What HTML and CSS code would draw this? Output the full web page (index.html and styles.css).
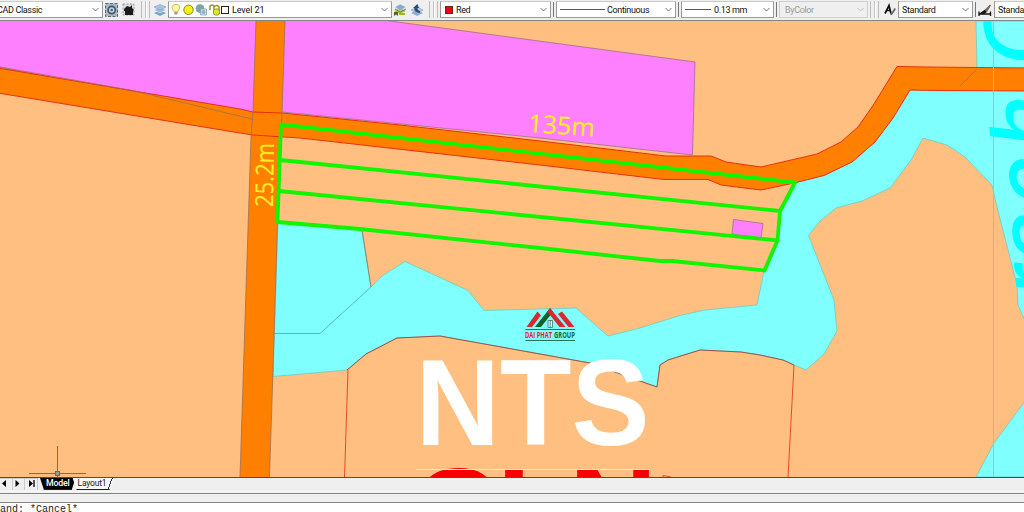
FILE: index.html
```html
<!DOCTYPE html>
<html lang="en">
<head>
<meta charset="utf-8">
<title>Drawing</title>
<link rel="stylesheet" href="styles.css">
</head>
<body>
<div class="app">
  <header class="toolbar">
    <div class="combo workspace"><span class="label">CAD Classic</span><svg class="arrow" viewBox="0 0 7 5"><path d="M.5 1 3.500 4 6.500 1"/></svg></div>
    <svg class="icon" viewBox="0 0 14 14"><rect x=".5" y=".5" width="12" height="13" fill="#a9b8c4" stroke="#58697a" stroke-dasharray="3 1.500"/><circle cx="6.700" cy="7" r="3.600" fill="#cad5dd" stroke="#43576a" stroke-width="1.700"/><circle cx="6.700" cy="7" r="1.300" fill="#567"/></svg>
    <svg class="icon gap-sm" viewBox="0 0 14 14"><rect x="1" y="1" width="11" height="11" fill="#ddd" stroke="#999" stroke-dasharray="2 1.500"/><path d="M2 6 5 3 8 4 10 2v3l2 2-1 1v4H3V8H2z" fill="#191b1d"/></svg>
    <i class="grip"></i>
    <svg class="icon" viewBox="0 0 14 14"><path d="M1 10 7 7.500l6 2.500-6 3z" fill="#7da0c6"/><path d="M1 7 7 4.500 13 7l-6 3z" fill="#a0bdd9" stroke="#e8f0f7" stroke-width=".5"/><path d="M1 4 7 1.500 13 4 7 7z" fill="#a9c5df" stroke="#6f91b4" stroke-width=".5"/></svg>
    <div class="combo layer">
      <svg class="layer-icons" viewBox="0 0 62 14">
        <path d="M5.500 9C3.500 7 3 5.800 3.100 4.200 3.300 2.500 4.700 1.500 7 1.500s3.600 1 3.700 2.700C10.800 5.800 10 7 8.500 9z" fill="#fff79b" stroke="#b8a64e" stroke-width=".8"/><path d="M5.500 9h3v2.500h-3z" fill="#a5997a"/>
        <circle cx="19.500" cy="6.800" r="4.700" fill="#f5f118" stroke="#85852f"/>
        <circle cx="31" cy="5.500" r="4" fill="#7aa6a4" stroke="#8ca9b4"/><path d="M31.500 6h6v6h-6z" fill="#d5e2ed" stroke="#809eb6" stroke-width=".8"/><circle cx="34.500" cy="9" r="2" fill="#91b2cd"/>
        <path d="M41 7V3q2-2 4 0v5M45 4q3-3 5 0v3" fill="none" stroke="#999719" stroke-width="1.500"/><rect x="44.500" y="6" width="6" height="6" rx="2" fill="#dce735" stroke="#999719"/>
        <rect x="52.500" y="3.500" width="7" height="7" fill="#fff" stroke="#222"/>
      </svg><span class="label">Level 21</span><svg class="arrow" viewBox="0 0 7 5"><path d="M.5 1 3.500 4 6.500 1"/></svg></div>
    <svg class="icon pull" viewBox="0 0 14 14"><path d="M1 8 7 5l6 3-6 3z" fill="#c1c52c"/><path d="M2 4 7 1l6 3-6 4z" fill="#8eabc5" stroke="#e8f0f7" stroke-width=".5"/><path d="M2 6 7 9l6-3" fill="none" stroke="#55749a"/><path d="M1 9v4l2-1.500L5 13V9z" fill="#53632e"/><path d="M6 11h6" stroke="#a5b426" stroke-width="2"/></svg>
    <svg class="icon gap-sm" viewBox="0 0 14 14"><path d="M1 10 7 7l6 3-6 3z" fill="#92afd0"/><path d="M1 7 7 4l6 3-6 3z" fill="#bacfe3" stroke="#6d8dae" stroke-width=".5"/><path d="M10 10Q3 9 4.500 5L3 5 7.500 1 9 5H7.500Q7 7 10 8z" fill="#284d7f"/></svg>
    <i class="grip layer-grip"></i>
    <div class="combo color"><i class="swatch"></i><span class="label">Red</span><svg class="arrow" viewBox="0 0 7 5"><path d="M.5 1 3.500 4 6.500 1"/></svg></div>
    <i class="bar"></i>
    <div class="combo linetype"><i class="sample"></i><span class="label">Continuous</span><svg class="arrow" viewBox="0 0 7 5"><path d="M.5 1 3.500 4 6.500 1"/></svg></div>
    <i class="bar"></i>
    <div class="combo weight"><i class="sample"></i><span class="label">0.13 mm</span><svg class="arrow" viewBox="0 0 7 5"><path d="M.5 1 3.500 4 6.500 1"/></svg></div>
    <i class="bar"></i>
    <div class="combo plot disabled"><span class="label">ByColor</span><svg class="arrow" viewBox="0 0 7 5"><path d="M.5 1 3.500 4 6.500 1"/></svg></div>
    <i class="grip plot-grip"></i>
    <svg class="icon text-icon" viewBox="0 0 14 14"><path d="M2 10.500 6 2.500l2 8M4 7.500h4" fill="none" stroke="#111" stroke-width="1.700"/><path d="m7 12 4.500-7 1.500 1-4 6z" fill="#72665d"/></svg>
    <div class="combo text-style"><span class="label">Standard</span><svg class="arrow" viewBox="0 0 7 5"><path d="M.5 1 3.500 4 6.500 1"/></svg></div>
    <i class="bar"></i>
    <svg class="icon" viewBox="0 0 14 14"><path d="M1 8.500v4.500M12.500 8.500v4.500M1 11h12" stroke="#111" stroke-width="1.300"/><path d="m2 10 5-3.500 2 2.500-3 2H1z" fill="#151515"/><path d="m7 6.500 5-5 1 1-4 6.500z" fill="#786a5f"/></svg>
    <div class="combo dim-style"><span class="label">Standard</span></div>
  </header>

  <main class="drawing">
    <svg class="map" viewBox="0 21 1024 456">
      <rect class="land" y="21" width="1024" height="456"/>
      <!-- water -->
      <g class="water">
        <path d="M278 222 362 230 371 287 382 276 405 261.500 468 290.500 484 310.500 576 308 608 336 640 328 680 315.500 705 310 757 305 764 271 777 240 780 211 795 183 824 175 852 162 875 142 893 118 910 90H1026V323L1018 305 1017 285 996 203 992 185 965 157 947 145 923 138 911 160 890 188 862 201 836 208 820 221 808.500 235.500 834 300 837 331 824 354 806 370 794 365 783 360 760 355 741 352 700 350 668 360 660 365 657 387 640 381 590 363 540 354 440 336 397 338 366 354 347 370 273 376.500Z"/>
        <path d="M976 21 977 68H1030V21Z"/>
        <path d="M1026 400 994 443 976 477H1026Z"/>
        <path class="bank" d="M273 333.500H320L371 287"/>
      </g>
      <path class="boundary" d="M794 365 783 360 760 355 741 352 700 350 668 360 660 365 657 387 640 381 590 363 540 354 440 336 397 338 366 354 347 370"/>
      <path class="redline" d="M348 370 344.500 477M794 365 788 477"/>
      <path class="greyline" d="M362 230 371 287"/>
      <!-- buildings -->
      <path class="building" d="M-2 19H378L390 21 695 62 692.500 155 540 138 282 112 253 118-2 67Z"/>
      <path class="building" d="M733.500 219.500 763 223.500 761 238 732 234Z"/>
      <!-- roads -->
      <path class="road" d="M256 21 253 112 251 137 246 290 240 477H269.500L273 370 277.500 222 282 113 285 21Z"/>
      <path class="road" d="M-2 68 240 109 253 112 282 113 400 125 540 141 666 156H711L726 162 761 167 817 154 841 142 858 127 874 104 897 66.500 925 67 1026 68V91L937 90.500 910 90 893 118 875 142 852 162 824 175.500 794 183 761 190 721 185 708 179.500H664L540 165 300 138 253 135 240 133-2 93Z"/>
      <path class="road-edge" d="M-2 68 240 109 253 112 282 113 400 125 540 141 666 156H711L726 162 761 167 817 154 841 142 858 127 874 104 897 66.500 925 67 1026 68M1026 91 937 90.500 910 90 893 118 875 142 852 162 824 175.500 794 183 761 190 721 185 708 179.500H664L540 165 300 138 253 135 240 133-2 93"/>
      <path class="greyline" d="M256 21 253 112 251 137 246 290 240 477M269.500 477 273 370 277.500 222 282 113 285 21M0 67 130 90 252 119M960 86 977 69"/>
      <text class="river-name" transform="matrix(-.055 -1 .99 .12 1065 298)" x="0 34 91 148 200 230" y="0 0 0 0 0 -3">rach C</text>
      <path class="meridian" d="M993.500 21V477"/>
      <!-- plot lots -->
      <path class="lot" d="M281 124.500 795 182.500 780 211 777.500 240.500 764.500 270.500 672 261H660L540 248 360 229 277.500 222ZM280 160 780 211M279 191 778 240.500"/>
      <text class="measure" transform="translate(527.500 132) rotate(4)" textLength="67" lengthAdjust="spacingAndGlyphs">135m</text>
      <text class="measure" transform="translate(273 207) rotate(-89)" textLength="64" lengthAdjust="spacingAndGlyphs">25.2m</text>
      <!-- land use labels -->
      <text class="landuse nts" x="415.500" y="445" textLength="234" lengthAdjust="spacingAndGlyphs">NTS</text>
      <text class="landuse cln" x="412 497 569" y="554">CLN</text>
      <path d="M416 469.500H650" stroke="#ffe7cf"/>
      <path class="redline" d="M663 477V475.500L671 477"/>
      <!-- company logo -->
      <g>
        <path d="M526.500 327 537.500 311.500 541 315.500 532 327Z" fill="#dc2630"/>
        <path d="M535 327 550 308 553 312 541 327Z" fill="#126228"/>
        <path d="M550 308 565.500 327H559.500L547.500 312Z" fill="#dc2630"/>
        <path d="M558 314 562 311.500 574.500 327H568.500Z" fill="#dc2630"/>
        <path d="M548 320.500h4.500v7H548zM550.200 320v7" fill="#dffafa" stroke="#41726d" stroke-width=".8"/>
        <path d="M525.500 329.500H575M525.500 340.500H575" stroke="#24745b"/>
        <text class="brand brand-red" x="525" y="338" textLength="27" lengthAdjust="spacingAndGlyphs">DAI PHAT</text>
        <text class="brand brand-green" x="554" y="338" textLength="21" lengthAdjust="spacingAndGlyphs">GROUP</text>
      </g>
      <!-- cursor -->
      <path d="M57.500 446V477M29 473.500H86" stroke="#75715c"/>
      <rect x="55.500" y="471.500" width="4" height="4" fill="#899d9b" stroke="#606e6c"/>
    </svg>
  </main>

  <nav class="tabs">
    <svg class="tab-nav" viewBox="0 0 40 12"><path d="M0 .5H38M12.500 0V12M24.500 0V12M37.500 0V12" stroke="#ccc"/><path d="M6 2V9L2 5.500ZM15.500 2V9L19.500 5.500ZM29 2V9L33 5.500Z" fill="#000"/><path d="M34 2V9" stroke="#000" stroke-width="1.300"/></svg>
    <span class="tab active">Model</span>
    <span class="tab">Layout1</span>
  </nav>
  <div class="splitter"></div>
  <footer class="command">mand: *Cancel*</footer>
</div>
</body>
</html>
```
FILE: styles.css
```css
body { margin: 0; background: #fff; font-family: "Liberation Sans", Arial, sans-serif; }
.app { width: 1024px; height: 512px; overflow: hidden; display: flex; flex-direction: column; }
.toolbar { height: 21px; box-sizing: border-box; flex: none; display: flex; align-items: flex-start; padding-top: 1px; background: #efefef; border-bottom: 1px solid #858585; overflow: hidden; }
.toolbar > * { flex: none; }
.combo { height: 17px; box-sizing: border-box; display: flex; align-items: center; background: #fff; border: 1px solid #999; border-top-color: #c8c8c8; padding: 0 3px; font: 9px Roboto, "Liberation Sans", sans-serif; letter-spacing: -.35px; color: #111; white-space: nowrap; overflow: hidden; }
.combo > * { flex: none; }
.label { line-height: 16px; }
.arrow { width: 7px; height: 5px; margin-left: auto; fill: none; stroke: #777; }
.icon { width: 14px; height: 14px; margin-top: 2px; }
.gap-sm { margin-left: 3px; }
.workspace { width: 103px; margin-right: 2px; border-left: 0; padding-left: 0; }
.workspace .label { margin-left: -3px; }
.grip { width: 9px; height: 17px; box-sizing: border-box; margin: 0 3px 0 5px; border: solid #bdbdbd; border-width: 0 1px; background: linear-gradient(90deg, transparent 3px, #c5c5c5 3px 4px, #fff 4px 5px, transparent 5px); }
.layer { width: 224px; margin-left: 1px; }
.layer-icons { width: 62px; height: 14px; margin-left: -3px; margin-right: 1px; }
.layer .label { letter-spacing: -.1px; }
.pull { margin-left: 1px; }
.layer-grip { margin: 0 2px 0 5px; }
.color { width: 111px; }
.swatch { width: 8px; height: 8px; box-sizing: border-box; background: #f00010; border: 1px solid #60282c; margin: 0 3px 0 1px; }
.bar { width: 1px; height: 15px; background: #777; margin: 1px 2px; }
.linetype { width: 120px; }
.sample { width: 45px; height: 1px; background: #555; margin-right: 2px; }
.weight { width: 93px; }
.weight .sample { width: 26px; margin-right: 3px; }
.plot { width: 89px; padding-left: 5px; }
.disabled { background: #efefef; color: #9a9a9a; border-color: #d0d0d0; }
.disabled .arrow { stroke: #bbb; }
.plot-grip { margin: 0 4px 0 2px; }
.text-style { width: 75px; margin-left: 1px; }
.dim-style { width: 40px; margin-left: 2px; }
.drawing { height: 456px; flex: none; }
.map { display: block; width: 1024px; height: 456px; }
.land { fill: #ffbf80; }
.water { fill: #80ffff; stroke: #65c9b9; stroke-width: .7; }
.bank { fill: none; stroke: #54bcbf; stroke-width: 1; }
.boundary { fill: none; stroke: #a54e43; }
.redline { fill: none; stroke: #e54b29; }
.greyline { fill: none; stroke: #a06f50; stroke-width: .8; }
.building { fill: #ff80ff; stroke: #9d708d; stroke-width: .8; }
.road { fill: #ff8000; }
.road-edge { fill: none; stroke: #e82f10; }
.meridian { stroke: #6bdfbb; fill: none; }
.river-name { font: 92px "Liberation Sans", Arial, sans-serif; fill: #00ffff; stroke: #00ffff; stroke-width: 1; }
.lot { fill: none; stroke: #12f500; stroke-width: 3.8; stroke-linejoin: round; }
.measure { font: 25px "Noto Sans", sans-serif; fill: #ffee20; }
.landuse { font: bold 122px "Liberation Sans", Arial, sans-serif; }
.nts { fill: #fff; }
.cln { fill: #f80000; }
.brand { font: bold 8px "Open Sans", sans-serif; }
.brand-red { fill: #dd1f35; }
.brand-green { fill: #10683a; }
.tabs { height: 14px; flex: none; box-sizing: border-box; display: flex; align-items: flex-start; background: #efefef; border-top: 1px solid #554b43; }
.tab-nav { width: 40px; height: 12px; flex: none; }
.tab { height: 11px; line-height: 11px; font-family: Roboto, "Liberation Sans", sans-serif; font-size: 8.5px; letter-spacing: -.2px; color: #222; padding: 0 7px 0 5px; margin-left: -3px; clip-path: polygon(0 0, 100% 0, calc(100% - 4px) 100%, 4px 100%); background: linear-gradient(110deg, #fafafa calc(100% - 5px), #333 calc(100% - 5px) calc(100% - 4px), #fafafa calc(100% - 4px)); border-bottom: 1px solid #222; }
.tab.active { background: #000; color: #fff; padding: 0 6px; margin-left: 0; font-size: 8.8px; font-weight: 500; }
.splitter { height: 12px; flex: none; box-sizing: border-box; border-bottom: 1px solid #858585; background: linear-gradient(#fafafa 1px, #efefef 1px 2px, #858585 2px 3px, #efefef 3px); }
.command { flex: 1; box-sizing: border-box; padding-top: 1px; font: 10px/11px "Liberation Mono", "Courier New", monospace; color: #222; margin-left: -6px; }
```
